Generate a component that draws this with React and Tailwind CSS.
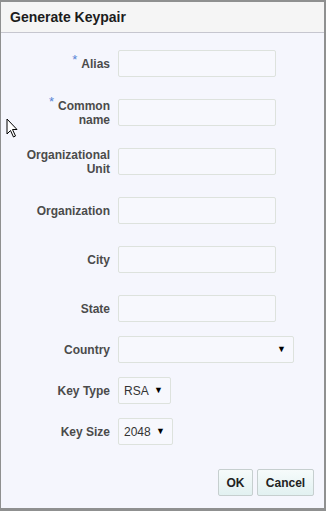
import React from "react";

const font = { fontFamily: '"Liberation Sans", Arial, sans-serif' };

function Label({ children, required }) {
  return (
    <div className="w-[109px] shrink-0 text-right text-[12px] font-bold leading-[14px] text-[#4b4b4b]">
      {required && <span className="relative -top-[4px] mr-[4px] text-[13px] font-normal text-[#5684d6]">*</span>}
      {children}
    </div>
  );
}

function TextField() {
  return <div className="ml-[8px] h-[27px] w-[158px] shrink-0 rounded-[2px] border border-[#dde2dd] bg-[#f7f8fd]" />;
}

function SelectField({ value, width }) {
  return (
    <div
      className={`ml-[8px] flex h-[27px] shrink-0 items-center justify-between rounded-[2px] border border-[#dde2dd] bg-[#f7f8fd] pl-[5px] pr-[7px] text-[12px] text-[#333] ${width}`}
    >
      <span>{value}</span>
      <span className="text-[9px] text-black">▼</span>
    </div>
  );
}

export default function App() {
  const textRows = [
    { label: "Alias", required: true },
    { label: <>Common<br />name</>, required: true },
    { label: <>Organizational<br />Unit</> },
    { label: "Organization" },
    { label: "City" },
    { label: "State" },
  ];

  return (
    <div className="h-[511px] w-[326px] bg-[#8f9090] pb-[3px] pl-[1px] pr-[2px] pt-[2px]" style={font}>
      <div className="relative flex h-full flex-col bg-[#f5f6fd]">
        <div className="flex h-[31px] items-center border-b border-[#c6c6cf] bg-[#f5f5f5] pl-[9px] text-[14px] font-bold text-[#1c1c1c]">
          Generate Keypair
        </div>

        <div className="flex flex-col gap-[22px] pt-[17px]">
          {textRows.map((r, i) => (
            <div key={i} className="flex h-[27px] items-center">
              <Label required={r.required}>{r.label}</Label>
              <TextField />
            </div>
          ))}
        </div>

        <div className="mt-[14px] flex flex-col gap-[14px]">
          <div className="flex h-[27px] items-center">
            <Label>Country</Label>
            <SelectField value="" width="w-[176px]" />
          </div>
          <div className="flex h-[27px] items-center">
            <Label>Key Type</Label>
            <SelectField value="RSA" width="w-[53px]" />
          </div>
          <div className="flex h-[27px] items-center">
            <Label>Key Size</Label>
            <SelectField value="2048" width="w-[55px]" />
          </div>
        </div>

        <div className="mt-[24px] flex justify-end gap-[4px] pr-[10px]">
          <button className="h-[27px] w-[35px] rounded-[2px] border border-[#c6cfcf] bg-gradient-to-b from-[#f6fbfb] to-[#e2f1f1] text-[12px] font-bold text-[#222]">
            OK
          </button>
          <button className="h-[27px] w-[57px] rounded-[2px] border border-[#c6cfcf] bg-gradient-to-b from-[#f6fbfb] to-[#e2f1f1] text-[12px] font-bold text-[#222]">
            Cancel
          </button>
        </div>

        <svg className="absolute left-[5px] top-[116px]" width="13" height="21" viewBox="0 0 13 21">
          <path d="M1 1 L1 16 L4.5 12.5 L7.5 19 L9.5 18 L6.5 11.5 L11 11.5 Z" fill="#fff" stroke="#000" strokeWidth="1" strokeLinejoin="miter" />
        </svg>
      </div>
    </div>
  );
}
